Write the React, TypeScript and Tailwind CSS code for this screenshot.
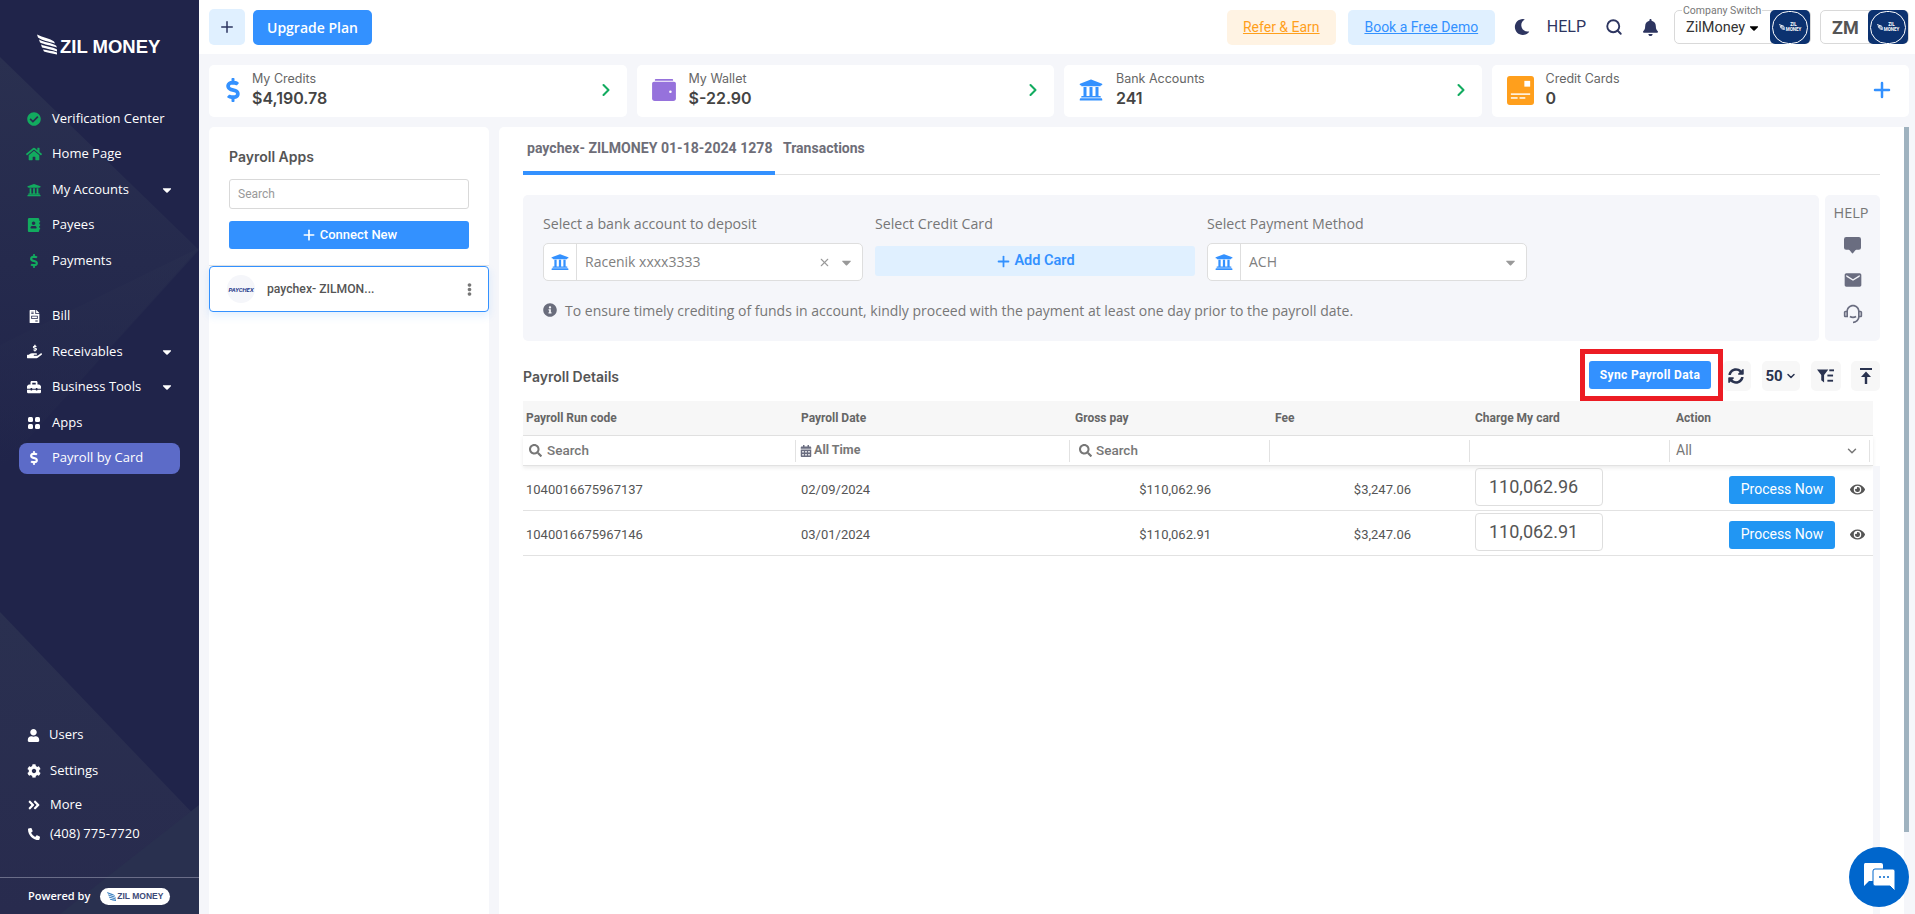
import type { ReactNode } from "react";
import {
  FaAddressBook,
  FaAngleDoubleRight,
  FaBell,
  FaCalendarAlt,
  FaCaretDown,
  FaCheckCircle,
  FaCog,
  FaDollarSign,
  FaEllipsisV,
  FaEye,
  FaFileInvoice,
  FaHandHoldingUsd,
  FaHome,
  FaInfoCircle,
  FaMoon,
  FaPhoneAlt,
  FaSearch,
  FaSyncAlt,
  FaToolbox,
  FaUniversity,
  FaUser,
} from "react-icons/fa";
import { LuChevronDown, LuChevronRight, LuPlus, LuSearch, LuX } from "react-icons/lu";
import { MdEmail } from "react-icons/md";
import { RiCustomerService2Line } from "react-icons/ri";
import { BsChatSquareFill } from "react-icons/bs";

const Wing = ({ className }: { className: string }) => (
  <svg viewBox="0 0 20 20" className={className} fill="currentColor">
    <path d="M0 0 C6 3 13 4 17 7 L18 9 C12 7 5 6 1 3 Z" />
    <path d="M2 5 C7 8 14 8 19 11 L20 13 C14 11 7 10 3 8 Z" />
    <path d="M4 10 C9 12 15 12 20 15 L20 17 C15 15 9 14 5 13 Z" />
    <path d="M6 15 C10 16 15 16 20 18 L20 20 C15 19 10 18 7 17 Z" />
  </svg>
);

const ZilBadge = () => (
  <div className="w-[40px] h-[34px] bg-[#0c3270] rounded-[5px] flex items-center justify-center shrink-0">
    <div className="w-[36px] h-[33px] rounded-full border border-white flex items-center justify-center gap-[1px] text-white">
      <Wing className="w-[6px] h-[6px]" />
      <span className="text-[4.5px] leading-[5px] font-bold text-center">
        ZIL
        <br />
        MONEY
      </span>
    </div>
  </div>
);

const NavItem = ({
  icon,
  label,
  caret,
  active,
}: {
  icon: ReactNode;
  label: string;
  caret?: boolean;
  active?: boolean;
}) => (
  <div
    className={`mx-[19px] mb-[4.5px] h-[31px] pl-[6px] pr-[6px] rounded-lg flex items-center text-white text-[13px] ${
      active ? "bg-[#5c6bc8]" : ""
    }`}
  >
    <span className="w-[18px] mr-[9px] flex justify-center shrink-0">{icon}</span>
    <span>{label}</span>
    {caret && <FaCaretDown className="ml-auto text-[14px]" />}
  </div>
);

const BottomItem = ({ icon, label, height }: { icon: ReactNode; label: string; height: string }) => (
  <div className={`pl-[27px] flex items-center text-white text-[13px] ${height}`}>
    <span className="w-[14px] mr-[9px] flex justify-center shrink-0">{icon}</span>
    <span>{label}</span>
  </div>
);

const StatCard = ({
  icon,
  label,
  value,
  action,
  iconWidth,
}: {
  icon: ReactNode;
  label: string;
  value: string;
  action: ReactNode;
  iconWidth: string;
}) => (
  <div className="bg-white rounded-[5px] flex items-center pl-[15px] pr-[15px] pb-[2px] font-['Inter',sans-serif]">
    <span className={`${iconWidth} flex justify-start shrink-0`}>{icon}</span>
    <div>
      <div className="text-[12.5px] leading-[16px] text-[#666]">{label}</div>
      <div className="text-[16px] leading-[22px] font-semibold text-[#444]">{value}</div>
    </div>
    <span className="ml-auto">{action}</span>
  </div>
);

const Chevron = () => <LuChevronRight className="-mr-[4px] text-[#12ab5f] text-[20px]" strokeWidth={2.5} />;

const SelectBox = ({ value, clear }: { value: string; clear?: boolean }) => (
  <div className="h-[38px] bg-white border-[1.5px] border-[#dedede] rounded-[5px] flex items-center">
    <span className="w-[33px] h-full border-r border-[#dedede] flex items-center justify-center shrink-0">
      <FaUniversity className="text-[#3391ff] text-[18px]" />
    </span>
    <span className="ml-[8px] pb-[1px] text-[14px] text-[#808080]">{value}</span>
    <span className="ml-auto flex items-center gap-[8px] pr-[8px] text-[#999]">
      {clear && <LuX className="text-[13px]" />}
      <FaCaretDown className="text-[15px]" />
    </span>
  </div>
);

const ToolButton = ({ children, width }: { children: ReactNode; width: string }) => (
  <div className={`h-[30px] ${width} bg-[#f7f7f7] rounded-[5px] flex items-center justify-center text-[#2a3350]`}>
    {children}
  </div>
);

const cols = "grid grid-cols-[275px_274px_200px_200px_200px_201px]";

const rows = [
  { code: "1040016675967137", date: "02/09/2024", gross: "$110,062.96", fee: "$3,247.06", charge: "110,062.96" },
  { code: "1040016675967146", date: "03/01/2024", gross: "$110,062.91", fee: "$3,247.06", charge: "110,062.91" },
];

export default function App() {
  return (
    <div className="relative h-screen w-full flex overflow-hidden bg-[#f5f6fa] font-['Roboto',sans-serif]">
      {/* sidebar */}
      <aside className="relative w-[199px] shrink-0 bg-[#20244a] flex flex-col font-['Open_Sans',sans-serif]">
        <svg className="absolute inset-0 w-full h-full" viewBox="0 0 199 914" preserveAspectRatio="none">
          <defs>
            <linearGradient id="fadeTop" x1="0" y1="0" x2="0" y2="1">
              <stop offset="0" stopColor="#2a3050" />
              <stop offset="1" stopColor="#20244a" />
            </linearGradient>
            <linearGradient id="fadeBottom" x1="0" y1="0" x2="0" y2="1">
              <stop offset="0" stopColor="#2a3050" />
              <stop offset="1" stopColor="#282b4e" />
            </linearGradient>
          </defs>
          <polygon points="0,57 199,250 0,470" fill="url(#fadeTop)" />
          <polygon points="199,248 0,345 0,470" fill="url(#fadeTop)" opacity="0.5" />
          <polygon points="0,612 199,820 199,914 0,914" fill="url(#fadeBottom)" />
          <polygon points="199,805 60,914 199,914" fill="#29304f" />
        </svg>
        <div className="relative flex flex-col h-full">
          <div className="h-[103px] pt-[34px] pl-[37px] shrink-0">
            <div className="flex items-end text-white">
              <Wing className="w-[20px] h-[21px] mr-[3px]" />
              <span className="font-['Liberation_Sans',sans-serif] font-bold text-[18.5px] leading-[17px]">
                ZIL MONEY
              </span>
            </div>
          </div>
          <NavItem icon={<FaCheckCircle className="text-[#12ab5f] text-[14px]" />} label="Verification Center" />
          <NavItem icon={<FaHome className="text-[#12ab5f] text-[16px]" />} label="Home Page" />
          <NavItem icon={<FaUniversity className="text-[#12ab5f] text-[14px]" />} label="My Accounts" caret />
          <NavItem icon={<FaAddressBook className="text-[#12ab5f] text-[14px]" />} label="Payees" />
          <NavItem icon={<FaDollarSign className="text-[#12ab5f] text-[14px]" />} label="Payments" />
          <div className="h-[20px] shrink-0" />
          <NavItem icon={<FaFileInvoice className="text-white text-[13px]" />} label="Bill" />
          <NavItem icon={<FaHandHoldingUsd className="text-white text-[15px]" />} label="Receivables" caret />
          <NavItem icon={<FaToolbox className="text-white text-[14px]" />} label="Business Tools" caret />
          <NavItem
            icon={
              <span className="grid grid-cols-2 gap-[2px]">
                <span className="w-[5px] h-[5px] rounded-[1.5px] bg-white" />
                <span className="w-[5px] h-[5px] rounded-[1.5px] bg-white" />
                <span className="w-[5px] h-[5px] rounded-[1.5px] bg-white" />
                <span className="w-[5px] h-[5px] rounded-[1.5px] bg-white" />
              </span>
            }
            label="Apps"
          />
          <NavItem icon={<FaDollarSign className="text-white text-[14px]" />} label="Payroll by Card" active />

          <div className="mt-auto">
            <BottomItem icon={<FaUser className="text-[13px]" />} label="Users" height="h-[36px] -ml-[1px]" />
            <BottomItem icon={<FaCog className="text-[14px]" />} label="Settings" height="h-[35px]" />
            <BottomItem icon={<FaAngleDoubleRight className="text-[14px]" />} label="More" height="h-[33px]" />
            <BottomItem icon={<FaPhoneAlt className="text-[12px]" />} label="(408) 775-7720" height="h-[26px]" />
            <div className="h-[30px]" />
            <div className="h-[37px] border-t border-[#6a6d88] flex items-center pl-[28px] text-white text-[11px] font-semibold">
              Powered by
              <span className="ml-[10px] w-[70px] h-[17px] rounded-full bg-white flex items-center justify-center gap-[1px] text-[#3d4a78]">
                <Wing className="w-[9px] h-[9px] text-[#3a7fc0]" />
                <span className="font-['Liberation_Sans',sans-serif] font-bold text-[8.5px]">ZIL MONEY</span>
              </span>
            </div>
          </div>
        </div>
      </aside>

      <div className="flex-1 min-w-0 flex flex-col">
        {/* top bar */}
        <header className="h-[54px] shrink-0 bg-white flex items-center pl-[10px] pr-[6px]">
          <div className="w-[36px] h-[36px] bg-[#e0f0ff] rounded-[5px] flex items-center justify-center text-[#2d3560]">
            <LuPlus className="text-[18px]" />
          </div>
          <div className="ml-[8px] w-[119px] h-[35px] bg-[#3391ff] rounded-[5px] flex items-center justify-center text-white text-[14px] font-semibold font-['Open_Sans',sans-serif]">
            Upgrade Plan
          </div>
          <div className="ml-auto w-[109px] h-[35px] bg-[#fff3e3] rounded-[5px] flex items-center justify-center text-[#ff9f1c] text-[14px] underline">
            Refer &amp; Earn
          </div>
          <div className="ml-[12px] w-[147px] h-[35px] bg-[#e0f0ff] rounded-[5px] flex items-center justify-center text-[#3391ff] text-[14px] underline">
            Book a Free Demo
          </div>
          <FaMoon className="ml-[19px] text-[#2d3560] text-[16px]" />
          <span className="ml-[17px] text-[#2d3560] text-[16px]">HELP</span>
          <LuSearch className="ml-[19px] text-[#2d3560] text-[18px]" strokeWidth={2.5} />
          <FaBell className="ml-[19px] text-[#2d3560] text-[17px]" />
          <div className="relative ml-[15px] w-[137px] h-[34px] border border-[#d9d9d9] rounded-[5px] flex items-center justify-between pl-[11px]">
            <span className="absolute -top-[6px] left-[7px] px-[1px] bg-white text-[10.5px] leading-[12px] text-[#777]">
              Company Switch
            </span>
            <span className="flex items-center gap-[2px] text-[14.5px] text-[#333] mt-[1px]">
              ZilMoney
              <FaCaretDown className="text-[14px] text-black" />
            </span>
            <ZilBadge />
          </div>
          <div className="ml-[9px] w-[89px] h-[34px] border border-[#d9d9d9] rounded-[5px] flex items-center justify-between pl-[11px]">
            <span className="text-[18px] font-bold text-[#555]">ZM</span>
            <ZilBadge />
          </div>
        </header>

        {/* stat cards */}
        <div className="mt-[11px] ml-[10px] mr-[6px] h-[52px] shrink-0 grid grid-cols-4 gap-[10px]">
          <StatCard
            iconWidth="w-[31px] -ml-[3px]"
            icon={<FaDollarSign className="text-[#3391ff] text-[24px]" />}
            label="My Credits"
            value="$4,190.78"
            action={<Chevron />}
          />
          <StatCard
            iconWidth="w-[37px]"
            icon={
              <svg viewBox="0 0 26 24" className="w-[24px] h-[22px] text-[#9672dc]" fill="currentColor">
                <path d="M4 0h18a1 1 0 0 1 0 2H4a1 1 0 0 1 0-2z" />
                <path d="M3 3h21a2 2 0 0 1 2 2v16a3 3 0 0 1-3 3H3a3 3 0 0 1-3-3V5a2 2 0 0 1 2-2z" />
                <circle cx="20" cy="14" r="1.4" fill="#fff" />
              </svg>
            }
            label="My Wallet"
            value="$-22.90"
            action={<Chevron />}
          />
          <StatCard
            iconWidth="w-[37px]"
            icon={<FaUniversity className="text-[#3391ff] text-[24px]" />}
            label="Bank Accounts"
            value="241"
            action={<Chevron />}
          />
          <StatCard
            iconWidth="w-[39px]"
            icon={
              <svg viewBox="0 0 28 30" className="w-[27px] h-[29px] text-[#ff9f1c]" fill="currentColor">
                <rect width="28" height="30" rx="3" />
                <rect x="18" y="5" width="6" height="6" fill="#fff" />
                <rect x="4" y="18" width="20" height="1.5" fill="#fff" />
                <rect x="4" y="22" width="7" height="1.5" fill="#fff" />
                <rect x="13" y="22" width="6" height="1.5" fill="#fff" />
              </svg>
            }
            label="Credit Cards"
            value="0"
            action={<LuPlus className="text-[#3391ff] text-[24px]" strokeWidth={2.5} />}
          />
        </div>

        <div className="mt-[10px] ml-[10px] flex-1 min-h-0 flex">
          {/* payroll apps */}
          <section className="w-[280px] shrink-0 bg-white rounded-t-[5px] font-['Inter',sans-serif]">
            <div className="h-[139px] border-b border-[#e3e3e3] px-[20px] pt-[20px]">
              <h2 className="text-[14px] leading-[20px] font-semibold text-[#555]">Payroll Apps</h2>
              <div className="mt-[12px] h-[30px] border border-[#d9d9d9] rounded-[3px] flex items-center pl-[8px] text-[12px] text-[#999] font-['Roboto',sans-serif]">
                Search
              </div>
              <div className="mt-[12px] h-[28px] bg-[#3391ff] rounded-[3px] flex items-center justify-center gap-[3px] text-white text-[13px] font-medium font-['Roboto',sans-serif]">
                <LuPlus className="text-[16px]" strokeWidth={2.5} />
                Connect New
              </div>
            </div>
            <div className="h-[46px] border border-[#3391ff] rounded-[4px] shadow-[0_4px_8px_rgba(51,145,255,0.15)] flex items-center pl-[17px] pr-[12px] font-['Roboto',sans-serif]">
              <span className="w-[28px] h-[28px] rounded-full bg-[#f5f6fa] flex items-center justify-center text-[6px] font-bold italic text-[#1f3a8a]">
                PAYCHEX
              </span>
              <span className="ml-[12px] text-[12.2px] font-medium text-[#555]">paychex- ZILMON...</span>
              <FaEllipsisV className="ml-auto text-[#777] text-[13px]" />
            </div>
          </section>

          {/* main panel */}
          <main className="ml-[10px] flex-1 min-w-0 bg-white rounded-tl-[5px] px-[24px] flex flex-col">
            <div className="h-[48px] shrink-0 flex border-b-[1.5px] border-[#e2e2e2]">
              <div className="w-[252px] h-[48px] border-b-[4px] border-[#3391ff] pl-[4px] pt-[11px] text-[14.1px] leading-[20px] font-bold text-[#6e6e78] whitespace-nowrap">
                paychex- ZILMONEY 01-18-2024 1278
              </div>
              <div className="ml-[8px] pt-[11px] text-[14px] leading-[20px] font-bold text-[#6e6e78]">Transactions</div>
            </div>

            <div className="mt-[20px] h-[146px] shrink-0 flex gap-[6px] font-['Open_Sans',sans-serif]">
              <div className="w-[1296px] bg-[#f5f6fa] rounded-[5px] pl-[20px] pt-[19px]">
                <div className="grid grid-cols-[320px_320px_320px] gap-x-[12px]">
                  <div>
                    <div className="h-[20px] mb-[9px] text-[14.2px] leading-[20px] text-[#777]">
                      Select a bank account to deposit
                    </div>
                    <SelectBox value="Racenik xxxx3333" clear />
                  </div>
                  <div>
                    <div className="h-[20px] mb-[12px] text-[14.2px] leading-[20px] text-[#777]">Select Credit Card</div>
                    <div className="h-[30px] bg-[#e0f0ff] rounded-[3px] flex items-center justify-center gap-[2px] text-[#3391ff] text-[14.5px] font-semibold font-['Roboto',sans-serif]">
                      <LuPlus className="text-[17px]" strokeWidth={2.5} />
                      Add Card
                    </div>
                  </div>
                  <div>
                    <div className="h-[20px] mb-[9px] text-[14.2px] leading-[20px] text-[#777]">Select Payment Method</div>
                    <SelectBox value="ACH" />
                  </div>
                </div>
                <div className="mt-[19px] h-[20px] flex items-center gap-[8px] text-[14px] text-[#777]">
                  <FaInfoCircle className="text-[#6a6d7c] text-[14px]" />
                  To ensure timely crediting of funds in account, kindly proceed with the payment at least one day prior
                  to the payroll date.
                </div>
              </div>
              <div className="w-[55px] bg-[#f5f6fa] rounded-[5px] flex flex-col items-center pt-[9px] pr-[3px] text-[#6a6d80]">
                <span className="text-[14.5px] leading-[18px] text-[#777]">HELP</span>
                <BsChatSquareFill className="mt-[15px] ml-[3px] text-[17px]" />
                <MdEmail className="mt-[16px] ml-[3px] text-[20px]" />
                <RiCustomerService2Line className="mt-[14px] ml-[3px] text-[20px]" />
              </div>
            </div>

            <div className="h-[60px] shrink-0 flex items-start pt-[20px]">
              <span className="text-[14px] leading-[32px] font-semibold text-[#555] font-['Inter',sans-serif]">
                Payroll Details
              </span>
              <div className="relative ml-auto h-[28px] w-[122px] bg-[#3391ff] rounded-[3px] flex items-center justify-center pb-[1px] text-white text-[12px] font-bold tracking-[0.35px]">
                Sync Payroll Data
                <span className="absolute -left-[9px] -right-[12px] -top-[12px] -bottom-[12px] border-[5.5px] border-[#ec1c24]" />
              </div>
              <div className="ml-[12px]">
                <ToolButton width="w-[28px]">
                  <FaSyncAlt className="text-[16px] -ml-[2px]" />
                </ToolButton>
              </div>
              <div className="ml-[11px]">
                <ToolButton width="w-[38px]">
                  <span className="text-[15px] font-bold">50</span>
                  <LuChevronDown className="text-[12px] ml-[2px]" strokeWidth={3} />
                </ToolButton>
              </div>
              <div className="ml-[11px]">
                <ToolButton width="w-[30px]">
                  <svg viewBox="0 0 18 14" className="w-[17px] h-[14px] -ml-[2px]" fill="currentColor">
                    <path d="M0 0h12L7.5 6v8L4.5 11.5V6z" />
                    <rect x="13" y="0" width="5" height="2" />
                    <rect x="11" y="5.5" width="6" height="2" />
                    <rect x="11" y="11" width="6" height="2" />
                  </svg>
                </ToolButton>
              </div>
              <div className="ml-[10px]">
                <ToolButton width="w-[29px]">
                  <svg viewBox="0 0 12 16" className="w-[12px] h-[16px]" fill="currentColor">
                    <rect x="0" y="0" width="12" height="2" />
                    <path d="M6 3.5 L11 9 H7.2 V16 H4.8 V9 H1 Z" />
                  </svg>
                </ToolButton>
              </div>
            </div>

            {/* table */}
            <div className="flex-1 min-h-0 flex">
              <div className="w-[1350px] shrink-0 text-[13px] text-[#555]">
                <div className={`${cols} h-[35px] bg-[#f7f7f7] border-b border-[#e2e2e2] items-center text-[12px] font-bold text-[#666]`}>
                  <span className="pl-[3px]">Payroll Run code</span>
                  <span className="pl-[3px]">Payroll Date</span>
                  <span className="pl-[3px]">Gross pay</span>
                  <span className="pl-[3px]">Fee</span>
                  <span className="pl-[3px]">Charge My card</span>
                  <span className="pl-[4px]">Action</span>
                </div>
                <div className={`${cols} h-[30px] items-center border-b border-[#e2e2e2] shadow-[0_2px_4px_rgba(0,0,0,0.08)] text-[13.5px] font-medium text-[#777]`}>
                  <span className="h-[22px] mr-[2px] border-r border-[#e2e2e2] pl-[6px] flex items-center gap-[5px]">
                    <FaSearch className="text-[13px]" />
                    Search
                  </span>
                  <span className="h-[22px] mr-[2px] border-r border-[#e2e2e2] pl-[2px] flex items-center gap-[2px] text-[12.5px] font-bold">
                    <FaCalendarAlt className="text-[12px] text-[#6a6d80]" />
                    All Time
                  </span>
                  <span className="h-[22px] mr-[2px] border-r border-[#e2e2e2] pl-[7px] flex items-center gap-[4px]">
                    <FaSearch className="text-[13px]" />
                    Search
                  </span>
                  <span className="h-[22px] mr-[2px] border-r border-[#e2e2e2]" />
                  <span className="h-[22px] mr-[2px] border-r border-[#e2e2e2]" />
                  <span className="h-[22px] mr-[3px] border-r border-[#e2e2e2] pl-[4px] pr-[10px] flex items-center justify-between text-[14px] font-normal">
                    All
                    <LuChevronDown className="text-[14px]" strokeWidth={2.5} />
                  </span>
                </div>
                {rows.map((row) => (
                  <div key={row.code} className={`${cols} h-[45px] items-center border-b border-[#e2e2e2]`}>
                    <span className="pl-[3px] pt-[3px]">{row.code}</span>
                    <span className="pl-[3px] pt-[3px]">{row.date}</span>
                    <span className="text-right pr-[61px] pt-[3px]">{row.gross}</span>
                    <span className="text-right pr-[61px] pt-[3px]">{row.fee}</span>
                    <span className="pl-[3px] pb-[2px]">
                      <span className="w-[128px] h-[38px] border border-[#dedede] rounded-[4px] flex items-center pl-[13px] pb-[2px] text-[18px] text-[#555]">
                        {row.charge}
                      </span>
                    </span>
                    <span className="flex items-center justify-end pr-[8px] pt-[3px]">
                      <span className="w-[106px] h-[28px] bg-[#2196f3] rounded-[3px] flex items-center justify-center text-white text-[14px]">
                        Process Now
                      </span>
                      <FaEye className="ml-[15px] text-[15px] text-[#555]" />
                    </span>
                  </div>
                ))}
              </div>
              <div className="w-[7px] shrink-0 mt-[65px] bg-[#f5f6fa]" />
            </div>
          </main>

          {/* page scrollbar */}
          <div className="w-[5px] h-[705px] bg-[#9fb2bf] shrink-0 mr-[6px]" />
        </div>
      </div>

      {/* chat widget */}
      <div className="absolute left-[1849px] top-[847px] w-[60px] h-[60px] rounded-full bg-[#0066cc] flex items-center justify-center">
        <svg viewBox="0 0 32 28" className="w-[32px] h-[28px]">
          <path d="M2 0h16a2 2 0 0 1 2 2v14a2 2 0 0 1-2 2H6l-5 5V2a2 2 0 0 1 1-2z" fill="#fff" />
          <path d="M12 6h18a2 2 0 0 1 2 2v20l-5-5H12a2 2 0 0 1-2-2V8a2 2 0 0 1 2-2z" fill="#fff" stroke="#0066cc" strokeWidth="1" />
          <circle cx="17" cy="14" r="1" fill="#0066cc" />
          <circle cx="21" cy="14" r="1" fill="#0066cc" />
          <circle cx="25" cy="14" r="1" fill="#0066cc" />
        </svg>
      </div>
    </div>
  );
}
